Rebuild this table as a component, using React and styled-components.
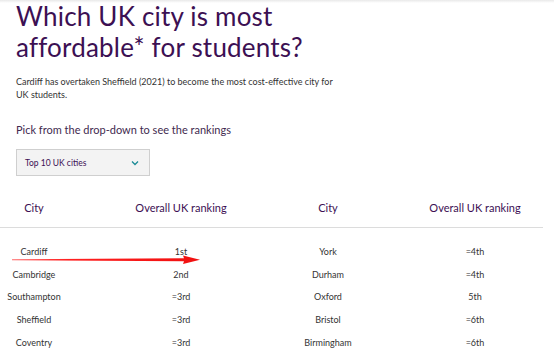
import React from "react";
import styled, { createGlobalStyle } from "styled-components";

const Global = createGlobalStyle`
  html, body { margin: 0; padding: 0; background: #fff; overflow: hidden; }
  body { font-family: Lato, "Noto Sans", sans-serif; }
`;

const Page = styled.div`
  position: relative;
  width: 554px;
  height: 356px;
  overflow: hidden;
  background: #fff;
`;

const TopShade = styled.div`
  height: 3px;
  background: linear-gradient(#e9e9e9, #fff);
`;

const Content = styled.div`
  padding: 0 16px;
`;

const Title = styled.h1`
  margin: -2px 0 0;
  font-family: Lato, sans-serif;
  font-weight: 400;
  font-size: 26px;
  line-height: 31px;
  color: #3c1053;
  letter-spacing: 0.2px;
`;

const Intro = styled.p`
  margin: 12px 0 0;
  font-size: 9px;
  line-height: 13px;
  color: #333;
  width: 330px;
`;

const Prompt = styled.p`
  margin: 22px 0 0;
  font-size: 11px;
  line-height: 14px;
  color: #3f2a4f;
`;

const Select = styled.div`
  margin-top: 12px;
  width: 134px;
  height: 27px;
  box-sizing: border-box;
  border: 1px solid #cfcfcf;
  background: #f3f3f3;
  display: flex;
  align-items: center;
  justify-content: space-between;
  padding: 0 10px 0 8px;
  font-size: 8.5px;
  color: #3c1053;
`;

const Table = styled.div`
  position: relative;
  margin-top: 18px;
`;

const Grid = styled.div`
  display: grid;
  grid-template-columns: repeat(4, 147px);
  margin-left: -39.5px;
  justify-items: center;
  align-items: center;
`;

const HeadRow = styled(Grid)`
  height: 27px;
`;

const HeadCell = styled.div`
  font-size: 11px;
  color: #3c1053;
`;

const Rule = styled.div`
  width: 543px;
  height: 1px;
  background: #dcdcdc;
  margin-top: 6px;
  margin-bottom: 12px;
`;

const Row = styled(Grid)`
  height: 22.8px;
`;

const Cell = styled.div`
  font-size: 9px;
  color: #333;
`;

const Arrow = styled.svg`
  position: absolute;
  left: 12px;
  top: 61px;
`;

const rows = [
  ["Cardiff", "1st", "York", "=4th"],
  ["Cambridge", "2nd", "Durham", "=4th"],
  ["Southampton", "=3rd", "Oxford", "5th"],
  ["Sheffield", "=3rd", "Bristol", "=6th"],
  ["Coventry", "=3rd", "Birmingham", "=6th"],
];

export default function App() {
  return (
    <Page>
      <Global />
      <TopShade />
      <Content>
        <Title>
          Which UK city is most
          <br />
          affordable* for students?
        </Title>
        <Intro>
          Cardiff has overtaken Sheffield (2021) to become the most cost-effective city for UK students.
        </Intro>
        <Prompt>Pick from the drop-down to see the rankings</Prompt>
        <Select>
          <span>Top 10 UK cities</span>
          <svg width="8" height="6" viewBox="0 0 8 6">
            <path d="M1 1.5 L4 4.5 L7 1.5" fill="none" stroke="#1a8a96" strokeWidth="1.3" />
          </svg>
        </Select>
      </Content>
      <Table>
        <HeadRow>
          <HeadCell>City</HeadCell>
          <HeadCell>Overall UK ranking</HeadCell>
          <HeadCell>City</HeadCell>
          <HeadCell>Overall UK ranking</HeadCell>
        </HeadRow>
        <Rule />
        {rows.map((r) => (
          <Row key={r[0]}>
            {r.map((c, i) => (
              <Cell key={i}>{c}</Cell>
            ))}
          </Row>
        ))}
        <Arrow width="190" height="10" viewBox="0 0 190 10">
          <defs>
            <linearGradient id="ag" x1="0" x2="1" y1="0" y2="0">
              <stop offset="0" stopColor="#ff6b6b" />
              <stop offset="0.3" stopColor="#ff2020" />
              <stop offset="1" stopColor="#f01010" />
            </linearGradient>
          </defs>
          <polygon points="0,4.3 172,3.3 171,0.5 188,4.8 171,9 172,6.3 0,5.2" fill="url(#ag)" />
        </Arrow>
      </Table>
    </Page>
  );
}
